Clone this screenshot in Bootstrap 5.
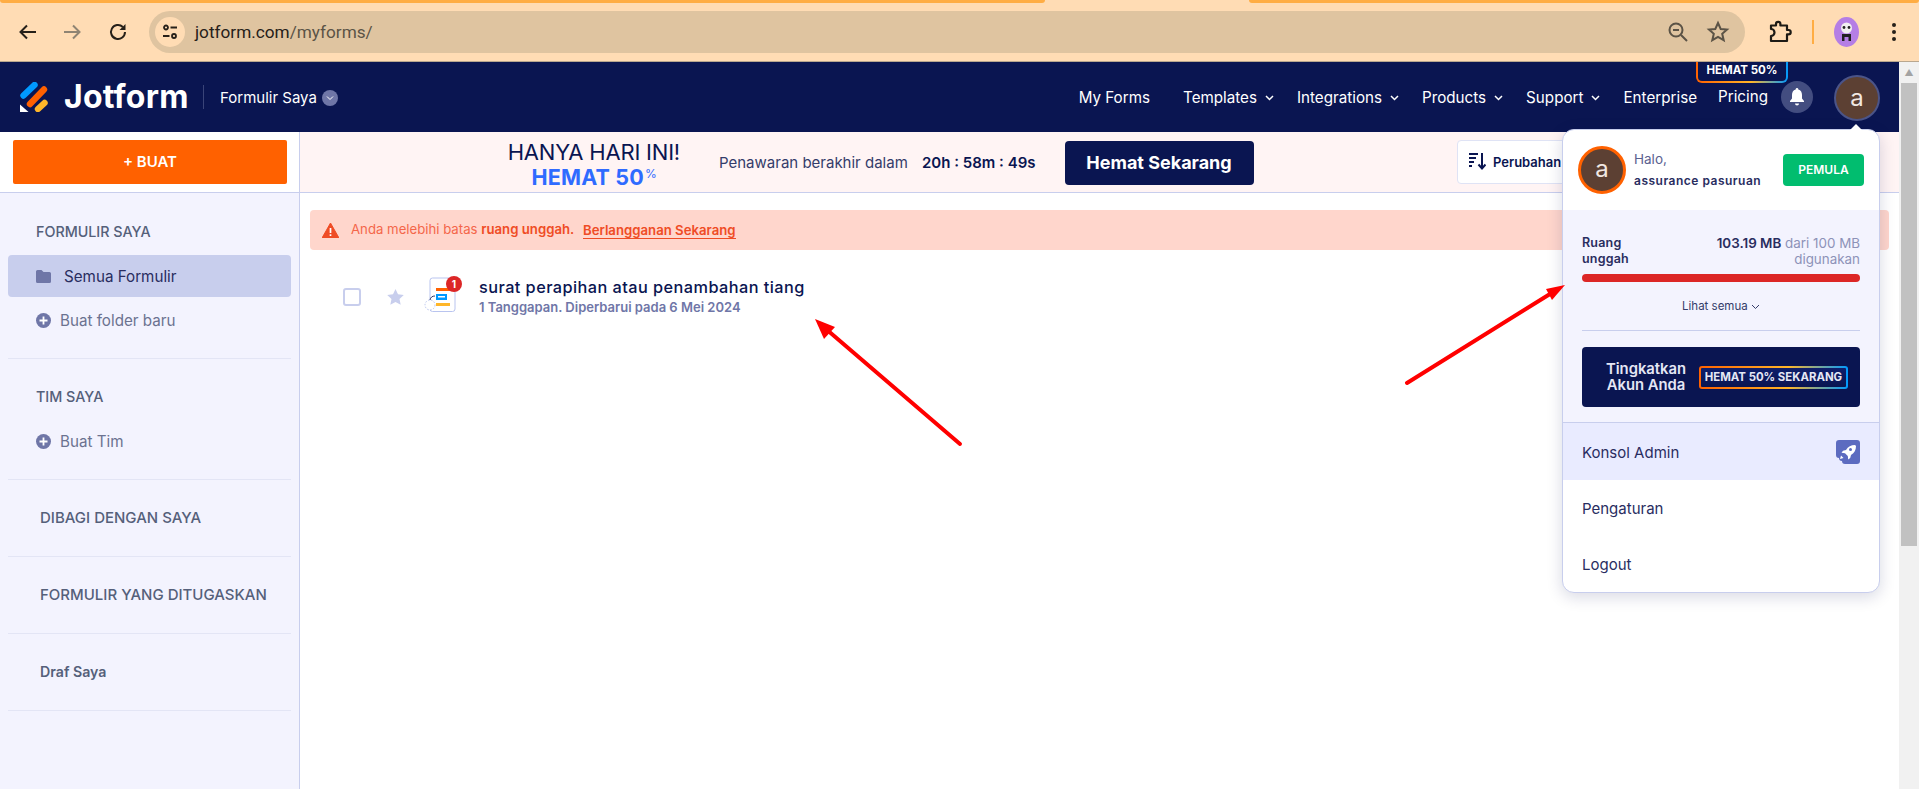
<!DOCTYPE html>
<html lang="id">
<head>
<meta charset="utf-8">
<title>Jotform</title>
<link href="https://cdn.jsdelivr.net/npm/bootstrap@5.3.0/dist/css/bootstrap.min.css" rel="stylesheet">
<style>
html,body{height:789px;overflow:hidden;margin:0}
body{font-family:Inter,"Noto Sans",sans-serif;color:#0a1551;background:#fff;position:relative}
.tabstrip{height:3px;background:#ffdcb4}
.tabstrip i{display:block;height:3px;background:#ffad44;border-radius:0 0 6px 6px}
.tabstrip .seg1{width:1045px}
.tabstrip .seg2{width:670px}
.chromebar{height:59px;background:#ffdcb4;border-bottom:1px solid #b9a78f;padding-left:15px}
.navbtn{width:26px;height:26px;margin-right:18px;flex:none}
.navbtn.rl{margin-left:2px;margin-right:19px}
.urlpill{width:1596px;height:42px;background:#dfc4a0;border-radius:21px;padding:0 15px 0 6px;flex:none;margin-left:-1px}
.siteinfo{width:30px;height:30px;background:#ffdcb4;border-radius:50%;margin-right:10px}
.urltext{font-family:Roboto,sans-serif;font-size:17.2px;color:#5b5346;margin-top:1px}
.urltext b{font-weight:400;color:#262019}
.chromeright{margin-left:23px;flex:none}
.chromesep{width:2px;height:24px;background:#ffad44;margin:0 20px}
.kebab{margin-left:32px}
.appcol{width:1899px;flex:none}
.scrolltrack{width:20px;background:#f1f1f1;height:727px;flex:none;padding:0 2px}
.scrollup{height:21px;text-align:center;color:#a3a3a3;font-size:9px;line-height:22px}
.scrollthumb{height:463px;background:#c1c1c1}
.jf-nav{height:70px;background:#0a1551;padding:0 19px 0 20px;flex-wrap:nowrap}
.brandname{font-weight:700;font-size:32px;letter-spacing:.2px;color:#fff;margin-left:16px;line-height:1;width:123px;white-space:nowrap}
.branddiv{width:1px;height:24px;background:#3a4478;margin:0 16px}
.wsname{font-size:15px;color:#fff;margin-top:2px}
.wschev{width:16px;height:16px;background:#6f76a7;border-radius:50%;margin-left:5px;margin-top:2px}
.jf-nav .nav-link{color:#fff;font-size:15.2px;padding:0;white-space:nowrap;display:flex;align-items:center;margin-left:23px;margin-top:2px}
.jf-nav .nav-link.myforms{margin-left:0;margin-right:10px}
.jf-nav .nav-link svg{margin-left:8px}
.pricingwrap{position:relative;margin-left:21px}
.jf-nav .pricingwrap .nav-link{margin-left:0;margin-top:0}
.hematbadge{position:absolute;top:-24px;left:-22px;width:92px;height:21px;border:2px solid transparent;border-top:0;border-radius:0 0 6px 6px;background:linear-gradient(#0a1551,#0a1551) padding-box,linear-gradient(90deg,#ff6100,#ffb629 60%,#0099ff) border-box;color:#fff;font-size:11.5px;font-weight:700;text-align:center;line-height:17px;white-space:nowrap}
.bellbtn{width:32px;height:32px;border-radius:50%;background:#434d80;margin-left:13px;border:0;padding:0}
.acctwrap{position:relative;margin-left:21px;margin-top:2px}
.avatarbtn{width:46px;height:46px;border-radius:50%;background:#5c4033;border:2px solid #4b5488;color:#f1e8e2;font-size:24px;line-height:1;padding:0;display:block}
.acctmenu{display:block;position:absolute;top:54px;right:0;left:auto;width:318px;height:464px;margin:0;padding:0;border:1px solid #c8ceed;border-radius:12px;box-shadow:0 4px 16px rgba(10,21,81,.16);overflow:visible;z-index:20;background:#fff}
.acctcaret{position:absolute;top:-6px;right:17px;width:0;height:0;border-left:6px solid transparent;border-right:6px solid transparent;border-bottom:6px solid #fff}
.accthead{height:80px;padding:0 15px}
.acctavatar{width:48px;height:48px;border-radius:50%;background:#5c4033;border:3px solid #ff6100;color:#f1e8e2;font-size:24px;line-height:40px;text-align:center;flex:none}
.accthello{font-size:13.5px;color:#5a6190;line-height:18px}
.acctname{font-size:12px;font-weight:600;color:#292d5f;letter-spacing:.5px;line-height:18px;margin-top:4px;white-space:nowrap}
.planchip{width:81px;height:32px;background:#01bd6f;border-radius:4px;color:#fff;font-size:12px;font-weight:600;line-height:32px;text-align:center;margin-left:auto}
.acctusage{height:213px;background:#f3f3fe;padding:25px 19px 0;border-bottom:1px solid #c8ceed}
.usagelabel{font-size:12.5px;font-weight:600;color:#292d5f;line-height:16px;letter-spacing:.2px}
.usageright{font-size:13.4px;line-height:16px;color:#8d92b8;text-align:right}
.usageright b{font-weight:600;color:#292d5f}
.usagebar{height:8px;background:#dc2626;border-radius:4px;margin-top:7px}
.seeall{font-size:11.5px;color:#343c6a;text-align:center;margin-top:16px;line-height:16px}
.usagediv{height:1px;background:#c8ceed;margin-top:16px}
.upgradebox{height:60px;background:#0a1551;border-radius:4px;margin-top:16px;padding:0 12px 0 23px}
.upgradetxt{width:82px;font-size:14.8px;font-weight:600;color:#e5e7f5;line-height:16px;text-align:center;white-space:nowrap;flex:none}
.upgradechip{flex:1;margin-left:12px;height:23px;border:2px solid transparent;border-radius:3px;background:linear-gradient(#0e1e6b,#0a1551) padding-box,linear-gradient(90deg,#ff6100,#ffb629 60%,#0099ff) border-box;color:#e5e7f5;font-size:11.4px;font-weight:700;text-align:center;line-height:19px;white-space:nowrap}
.acctmenu .dropdown-item{height:56px;padding:3px 19px 0;font-size:15px;color:#292d5f;display:flex;align-items:center;justify-content:space-between}
.acctmenu .itemhi{height:57px;background:#e9ebff}
.acctmenu .itemhi svg{margin-top:-3px}
.acctmenu .lastitem{border-radius:0 0 12px 12px}
.subbar{height:61px;border-bottom:1px solid #c8ceed}
.createcell{width:300px;padding:8px 12px 8px 13px;border-right:1px solid #c8ceed;flex:none}
.createbtn{width:100%;height:44px;background:#ff6100;border:0;border-radius:2px;color:#fff;font-size:15px;font-weight:600;padding:0}
.promo{flex:1;background:#fff4f4;position:relative;min-width:0}
.promol1{font-size:22px;line-height:24px;color:#0a1551;padding-top:6px;width:380px;text-align:right;letter-spacing:-.2px}
.promol2{font-size:21.5px;line-height:26px;color:#2f6bff;font-weight:700;width:357px;text-align:right;letter-spacing:.2px}
.promol2 sup{font-size:12px;font-weight:400;top:-.6em;margin-left:1px}
.promotimer{font-size:15px;color:#343c6a;margin-left:39px;white-space:nowrap;margin-top:2px}
.promotimer b{font-weight:600;color:#0a1551;margin-left:10px}
.hematbtn{width:189px;height:44px;background:#0a1551;color:#fff;border-radius:4px;font-size:18px;font-weight:700;padding:0;margin-left:29px;border:0;flex:none;margin-top:1px}
.promowrap{height:60px}
.sortbtn{position:absolute;left:1157px;top:8px;width:250px;height:44px;background:#fff;border:1px solid #dfe3f5;border-radius:4px;font-size:13px;font-weight:600;color:#0a1551;padding:0 0 0 10px;text-align:left}
.sortbtn svg{margin-right:7px;vertical-align:-4px}
.bodyrow{height:596px}
.sidepanel{width:300px;background:#f3f3fe;border-right:1px solid #c8ceed;flex:none}
.sidesec{margin:0 8px;border-bottom:1px solid #e3e5f5;padding-top:26px;padding-bottom:26px}
.sidesec.first{padding-top:27px}
.sidesec.tight{padding-bottom:0}
.sidehead{font-size:14.3px;font-weight:500;line-height:24px;color:#55607a;padding-left:28px;white-space:nowrap}
.sidehead.ind{padding-left:32px;font-size:15px}
.sidehead.lower{font-size:14.2px;font-weight:600}
.sideact{height:42px;background:#c8ceed;border-radius:4px;margin-top:11px;padding-left:28px;font-size:15.2px;color:#292d5f}
.sideact span{margin-top:3px}
.sideact svg{margin-right:13px}
.sideadd{height:42px;margin-top:2px;padding-left:28px;font-size:15.2px;color:#6b7290;margin-bottom:17px}
.sideadd span{margin-top:3px}
.sideadd svg{margin-right:9px}
.sideadd.b{margin-top:11px}
.mainpane{flex:1;padding:17px 10px 0;min-width:0}
.warnbar{height:40px;background:#ffd6cc;border:0;border-radius:4px;margin:0;padding:0 12px;font-size:13.2px;color:#f4664a}
.warnbar svg{margin-right:12px;flex:none}
.warnbar b{font-weight:600;color:#ef4c25}
.warnbar a{font-weight:600;color:#ef4c25;text-decoration:none;border-bottom:1.5px solid #ef4c25;margin-left:5px;line-height:16px}
.formrow{margin-top:27px;padding-left:33px;height:40px}
.fcheck{width:18px;height:18px;border:2px solid #c8ceed;border-radius:3px;background:#fff;flex:none}
.fstar{margin-left:26px;flex:none}
.ficon{position:relative;margin-left:20px;width:32px;height:36px;flex:none;margin-top:-4px}
.fbadge{position:absolute;top:-1px;right:-6px;width:16px;height:16px;padding:0;border-radius:50%;background:#dc2626;color:#fff;font-size:10px;font-weight:700;line-height:16px;text-align:center}
.ftext{margin-left:23px;margin-top:-3px}
.ftitle{font-size:16.3px;font-weight:500;letter-spacing:.45px;line-height:20px;color:#0a1551;white-space:nowrap}
.fsub{font-size:13px;font-weight:600;color:#6f76a7;line-height:16px;margin-top:2px;white-space:nowrap}
.arrowlayer{position:absolute;left:0;top:0;width:1919px;height:789px;pointer-events:none;z-index:50}
</style>
</head>
<body>
<div class="tabstrip d-flex justify-content-between"><i class="seg1"></i><i class="seg2"></i></div>
<div class="chromebar d-flex align-items-center">
  <svg class="navbtn" viewBox="0 0 26 26" fill="none" stroke="#262019" stroke-width="2"><path d="M21 13H6M12 6.500 5.500 13l6.500 6.500"/></svg>
  <svg class="navbtn" viewBox="0 0 26 26" fill="none" stroke="#8f8473" stroke-width="2"><path d="M5 13h15M14 6.500l6.500 6.500-6.500 6.500"/></svg>
  <svg class="navbtn rl" viewBox="0 0 26 26" fill="none" stroke="#262019" stroke-width="2"><path d="M20 13a7 7 0 1 1-2.200-5.100"/><path d="M20.500 5v6H14.500z" stroke="none" fill="#262019"/></svg>
  <div class="urlpill d-flex align-items-center">
    <div class="siteinfo d-flex align-items-center justify-content-center"><svg width="18" height="18" viewBox="0 0 18 18" fill="none" stroke="#262019" stroke-width="1.800"><circle cx="5" cy="4.500" r="2"/><path d="M9.500 4.500H16M2 13h6.500"/><circle cx="13" cy="13" r="2"/></svg></div>
    <span class="urltext"><b>jotform.com</b>/myforms/</span>
    <svg class="ms-auto" width="24" height="24" viewBox="0 0 24 24" fill="none" stroke="#5b5346" stroke-width="2"><circle cx="10" cy="10" r="6.500"/><path d="M7 10h6M15 15l6 6"/></svg>
    <svg class="ms-3" width="24" height="24" viewBox="0 0 24 24" fill="none" stroke="#5b5346" stroke-width="2"><path d="m12 3 2.700 6 6.300.6-4.800 4.200 1.500 6.400L12 16.800 6.300 20.200l1.500-6.400L3 9.600 9.300 9z"/></svg>
  </div>
  <div class="chromeright d-flex align-items-center">
    <svg width="24" height="24" viewBox="0 0 24 24" fill="none" stroke="#1d1a15" stroke-width="2.200"><path d="M3 9V5.500h5V4a2.200 2.200 0 0 1 4.400 0v1.500H19V10h1.500a2.200 2.200 0 0 1 0 4.400H19V21H3v-5a3 3 0 0 0 0-7z" stroke-linejoin="round"/></svg>
    <div class="chromesep"></div>
    <svg width="25" height="30" viewBox="0 0 25 30"><ellipse cx="12.500" cy="15" rx="12.500" ry="15" fill="#b57ee5"/><circle cx="12.500" cy="11" r="5.500" fill="#f1f1f1"/><circle cx="10" cy="10.500" r="1.400" fill="#222"/><circle cx="15" cy="10.500" r="1.400" fill="#222"/><path d="M8 24v-7h9v7h-2.500v-4h-4v4z" fill="#222"/></svg>
    <svg class="kebab" width="6" height="22" viewBox="0 0 6 22" fill="#262019"><circle cx="3" cy="4" r="2"/><circle cx="3" cy="11" r="2"/><circle cx="3" cy="18" r="2"/></svg>
  </div>
</div>

<div class="d-flex">
  <div class="appcol">
    <nav class="navbar jf-nav">
      <div class="d-flex align-items-center">
        <svg width="28" height="30" viewBox="0 0 28 30" fill="none" stroke-width="6.400" stroke-linecap="round"><path d="M3.500 13.500 14.500 3" stroke="#0099ff"/><path d="M10 22 24 7.500" stroke="#ff6100"/><path d="M18 27 24.500 21" stroke="#ffb629"/><path d="M0 22.500V30h8.500z" fill="#fff" stroke="none"/></svg>
        <span class="brandname">Jotform</span>
        <span class="branddiv"></span>
        <span class="wsname">Formulir Saya</span>
        <span class="wschev d-flex align-items-center justify-content-center"><svg width="10" height="10" viewBox="0 0 10 10" fill="none" stroke="#fff" stroke-width="1"><path d="m2 3.500 3 3 3-3"/></svg></span>
      </div>
      <div class="d-flex align-items-center ms-auto">
        <a class="nav-link myforms" href="#">My Forms</a>
        <a class="nav-link" href="#">Templates<svg width="9" height="6" viewBox="0 0 9 6" fill="none" stroke="#fff" stroke-width="1.500"><path d="m1 1 3.500 3.500L8 1"/></svg></a>
        <a class="nav-link" href="#">Integrations<svg width="9" height="6" viewBox="0 0 9 6" fill="none" stroke="#fff" stroke-width="1.500"><path d="m1 1 3.500 3.500L8 1"/></svg></a>
        <a class="nav-link" href="#">Products<svg width="9" height="6" viewBox="0 0 9 6" fill="none" stroke="#fff" stroke-width="1.500"><path d="m1 1 3.500 3.500L8 1"/></svg></a>
        <a class="nav-link" href="#">Support<svg width="9" height="6" viewBox="0 0 9 6" fill="none" stroke="#fff" stroke-width="1.500"><path d="m1 1 3.500 3.500L8 1"/></svg></a>
        <a class="nav-link" href="#">Enterprise</a>
        <div class="pricingwrap"><span class="hematbadge">HEMAT 50%</span><a class="nav-link" href="#">Pricing</a></div>
        <button class="bellbtn d-flex align-items-center justify-content-center" type="button" aria-label="Notifikasi"><svg width="16" height="18" viewBox="0 0 16 18" fill="#fff"><path d="M8 0a1.300 1.300 0 0 1 1.300 1.400C12 2 13 4.200 13 7v3.500l2 2.500v1H1v-1l2-2.500V7c0-2.800 1-5 3.700-5.600A1.300 1.300 0 0 1 8 0zM6 15.500h4a2 2 0 0 1-4 0z"/></svg></button>
        <div class="acctwrap">
          <button class="avatarbtn" type="button">a</button>
          <div class="dropdown-menu acctmenu">
            <span class="acctcaret"></span>
            <div class="accthead d-flex align-items-center">
              <div class="acctavatar">a</div>
              <div class="ms-2">
                <div class="accthello">Halo,</div>
                <div class="acctname">assurance pasuruan</div>
              </div>
              <div class="planchip">PEMULA</div>
            </div>
            <div class="acctusage">
              <div class="d-flex justify-content-between">
                <div class="usagelabel">Ruang<br>unggah</div>
                <div class="usageright"><b>103.19 MB</b> dari 100 MB<br>digunakan</div>
              </div>
              <div class="usagebar"></div>
              <div class="seeall">Lihat semua <svg width="9" height="6" viewBox="0 0 9 6" fill="none" stroke="#343c6a" stroke-width="1"><path d="m1 1 3.500 3.500L8 1"/></svg></div>
              <div class="usagediv"></div>
              <div class="upgradebox d-flex align-items-center">
                <div class="upgradetxt">Tingkatkan<br>Akun Anda</div>
                <div class="upgradechip">HEMAT 50% SEKARANG</div>
              </div>
            </div>
            <a class="dropdown-item itemhi" href="#">Konsol Admin
              <svg width="24" height="24" viewBox="0 0 24 24"><path d="M3 0h18a3 3 0 0 1 3 3v18a3 3 0 0 1-3 3H9a3 3 0 0 1-3-3 3 3 0 0 1-3-3 3 3 0 0 1-3-3V3a3 3 0 0 1 3-3z" fill="#5c6bc0"/><path d="M19 5c-4 0-7 1.500-9 5l-3 .8-1.500 2 3.500.4 2.800 2.800.4 3.500 2-1.500.8-3c3.500-2 5-5 5-9z" fill="#fff"/><circle cx="14.500" cy="9.500" r="1.500" fill="#5c6bc0"/><path d="M5 15.500 7.500 18 4 19z" fill="#fff"/></svg>
            </a>
            <a class="dropdown-item" href="#">Pengaturan</a>
            <a class="dropdown-item lastitem" href="#">Logout</a>
          </div>
        </div>
      </div>
    </nav>

    <div class="subbar d-flex">
      <div class="createcell"><button class="btn createbtn" type="button">+ BUAT</button></div>
      <div class="promo">
        <div class="d-flex align-items-center promowrap">
          <div>
            <div class="promol1">HANYA HARI INI!</div>
            <div class="promol2">HEMAT&nbsp;50<sup>%</sup></div>
          </div>
          <div class="promotimer">Penawaran berakhir dalam <b>20h : 58m : 49s</b></div>
          <button class="btn hematbtn" type="button">Hemat Sekarang</button>
        </div>
        <button class="sortbtn" type="button"><svg width="18" height="20" viewBox="0 0 18 20" fill="none" stroke="#0a1551" stroke-width="2"><path d="M1 3h9M1 7h7M1 11h5M1 15h3"/><path d="M14 2v15M10.500 13.500 14 17.500l3.500-4"/></svg>Perubahan</button>
      </div>
    </div>

    <div class="bodyrow d-flex">
      <aside class="sidepanel">
        <div class="sidesec first tight">
          <div class="sidehead">FORMULIR SAYA</div>
          <div class="sideact d-flex align-items-center"><svg width="15" height="13" viewBox="0 0 15 13" fill="#6f76a7"><path d="M1.500 0h4l2 2h6A1.500 1.500 0 0 1 15 3.500v8a1.500 1.500 0 0 1-1.500 1.500h-12A1.500 1.500 0 0 1 0 11.500v-10A1.500 1.500 0 0 1 1.500 0z"/></svg><span>Semua Formulir</span></div>
          <div class="sideadd d-flex align-items-center"><svg width="15" height="15" viewBox="0 0 15 15"><circle cx="7.500" cy="7.500" r="7.500" fill="#6f76a7"/><path d="M7.500 3.500v8M3.500 7.500h8" stroke="#fff" stroke-width="1.800"/></svg><span>Buat folder baru</span></div>
        </div>
        <div class="sidesec tight">
          <div class="sidehead">TIM SAYA</div>
          <div class="sideadd b d-flex align-items-center"><svg width="15" height="15" viewBox="0 0 15 15"><circle cx="7.500" cy="7.500" r="7.500" fill="#6f76a7"/><path d="M7.500 3.500v8M3.500 7.500h8" stroke="#fff" stroke-width="1.800"/></svg><span>Buat Tim</span></div>
        </div>
        <div class="sidesec"><div class="sidehead ind">DIBAGI DENGAN SAYA</div></div>
        <div class="sidesec"><div class="sidehead ind">FORMULIR YANG DITUGASKAN</div></div>
        <div class="sidesec"><div class="sidehead ind lower">Draf Saya</div></div>
      </aside>
      <main class="mainpane">
        <div class="alert warnbar d-flex align-items-center" role="alert">
          <svg width="17" height="15" viewBox="0 0 17 15"><path d="M8.500 0 17 15H0z" fill="#ef4c25" stroke="#ef4c25" stroke-linejoin="round"/><path d="M8.500 5v5M8.500 11.300v1.700" stroke="#fff" stroke-width="1.700"/></svg>
          <span>Anda melebihi batas <b>ruang unggah.</b></span>&nbsp;<a href="#">Berlangganan Sekarang</a>
        </div>
        <div class="formrow d-flex align-items-center">
          <div class="fcheck"></div>
          <svg class="fstar" width="17" height="16" viewBox="0 0 17 16" fill="#c8ceed"><path d="m8.500 0 2.500 5.300 5.800.7-4.300 4 1.200 5.800-5.200-2.900-5.200 2.900L4.500 10 .2 6 6 5.300z"/></svg>
          <div class="ficon">
            <svg width="32" height="36" viewBox="0 0 32 36" fill="none"><rect x="6" y="1" width="25" height="33.500" rx="2.500" stroke="#b9c4ef"/><rect x="12" y="11" width="15" height="3" fill="#ff6100"/><rect x="12" y="17" width="11" height="6" fill="#0099ff"/><rect x="14" y="19" width="7" height="1.500" fill="#fff"/><rect x="12" y="26" width="14" height="3" fill="#ffb629"/><circle cx="6" cy="28" r="5" fill="#fff" stroke="#b9c4ef" stroke-dasharray="1.500 1.500"/><path d="M6 23a5 5 0 0 1 5-4" stroke="#343c6a"/></svg>
            <span class="badge fbadge">1</span>
          </div>
          <div class="ftext">
            <div class="ftitle">surat perapihan atau penambahan tiang</div>
            <div class="fsub">1 Tanggapan. Diperbarui pada 6 Mei 2024</div>
          </div>
        </div>
      </main>
    </div>
  </div>
  <div class="scrolltrack">
    <div class="scrollup">&#9650;</div>
    <div class="scrollthumb"></div>
  </div>
</div>

<svg class="arrowlayer" viewBox="0 0 1919 789" aria-hidden="true">
  <path d="M960 444 826 329" stroke="#f00" stroke-width="4" stroke-linecap="round" fill="none"/>
  <path d="M815 319 835 327 824 339z" fill="#f00"/>
  <path d="M1407 383 1550 294" stroke="#f00" stroke-width="4" stroke-linecap="round" fill="none"/>
  <path d="M1565 285 1546 289 1552 300z" fill="#f00"/>
</svg>
<script src="https://cdn.jsdelivr.net/npm/bootstrap@5.3.0/dist/js/bootstrap.bundle.min.js"></script>
</body>
</html>
